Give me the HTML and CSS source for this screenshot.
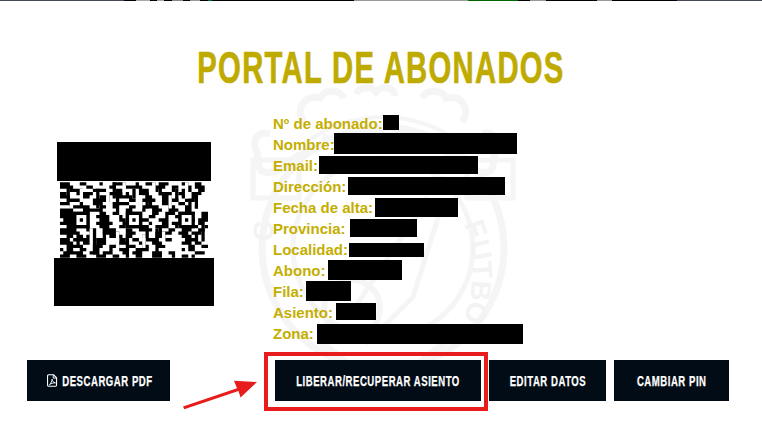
FILE: index.html
```html
<!DOCTYPE html>
<html lang="es">
<head>
<meta charset="utf-8">
<title>Portal de abonados</title>
<link rel="stylesheet" href="styles.css">
</head>
<body>
<div class="strip"></div>
<svg class="crest" viewBox="0 0 270 360" aria-hidden="true">
  <g fill="none" stroke="#f5f5f5">
    <path stroke-width="7" d="M22 52c-12-4-18 6-14 16 4 8 0 20 8 22 10 2 18-2 26-10 6-8 14-6 20-14 8 4 14-2 16-10 10 6 20 2 24-8 8 8 20 8 26 0 6 8 18 8 26 0 4 10 14 14 24 8 2 8 8 14 16 10 6 8 14 6 20 14 8 8 16 12 26 10 8-2 4-14 8-22 4-10-2-20-14-16"/>
    <path stroke-width="7" d="M56 40c-10-14 2-28 16-24 4-8 18-10 24 0M214 40c10-14-2-28-16-24-4-8-18-10-24 0M108 12c4-8 16-8 20-2 6-8 20-4 18 4"/>
    <circle cx="135" cy="166" r="121" stroke-width="7"/>
    <circle cx="135" cy="166" r="90" stroke-width="5"/>
    <path stroke-width="4" d="M55 62c50-36 110-36 160 0"/>
    <rect x="5" y="78" width="46" height="38" stroke-width="5"/>
    <rect x="219" y="78" width="46" height="38" stroke-width="5"/>
    <path stroke-width="5" d="M195 120 165 215 118 262M180 115 104 230"/>
    <circle cx="104" cy="226" r="28" stroke-width="6"/>
    <path stroke-width="7" d="M70 258 135 310 200 258"/>
  </g>
  <text class="crest-letter" transform="translate(216 142) rotate(71)">F</text>
  <text class="crest-letter" transform="translate(221 160) rotate(78)">U</text>
  <text class="crest-letter" transform="translate(224 180) rotate(86)">T</text>
  <text class="crest-letter" transform="translate(224 198) rotate(94)">B</text>
  <text class="crest-letter" transform="translate(221 218) rotate(103)">O</text>
  <text class="crest-letter" transform="translate(24 160) rotate(-85)">C</text>
</svg>

<main class="page">
  <h1 class="title">PORTAL DE ABONADOS</h1>
  <section class="details">
    <div class="qr-box">
      <svg class="qr" viewBox="0 0 45 45" aria-hidden="true">
        <path stroke="#000" stroke-width="1" fill="none" d="
        M0 11.500h3m3 0h2m4 0h1m3 0h4m3 0h1m2 0h3m2 0h2m4 0h2m2 0h2
        M0 12.500h4m4 0h2m5 0h2m3 0h5m4 0h3m2 0h2m2 0h2m1 0h3
        M3 13.500h4m3 0h4m3 0h2m5 0h3m2 0h1m4 0h1m2 0h3m2 0h2
        M0 14.500h2m3 0h5m5 0h6m3 0h3m3 0h4m2 0h2m2 0h3
        M0 15.500h3m4 0h2m3 0h3m2 0h5m4 0h2m3 0h3m3 0h1m2 0h2
        M2 16.500h5m3 0h5m2 0h1m3 0h2m2 0h4m2 0h5m2 0h3
        M0 17.500h3m3 0h1m3 0h3m3 0h5m3 0h1m2 0h1m3 0h3m2 0h2m1 0h1
        M3 18.500h6m3 0h2m2 0h2m3 0h2m2 0h5m3 0h2m3 0h2m1 0h1
        M0 19.500h4m3 0h6m4 0h1m2 0h2m3 0h1m2 0h3m2 0h3m2 0h2
        M0 20.500h9m3 0h2m2 0h2m2 0h5m3 0h2m2 0h3m1 0h5m2 0h2
        M0 21.500h9m2 0h4m3 0h1m1 0h5m2 0h2m3 0h1m2 0h5m3 0h2
        M1 22.500h8m3 0h3m3 0h2m2 0h5m3 0h3m3 0h5m1 0h3
        M0 23.500h9m2 0h5m3 0h6m2 0h1m3 0h2m1 0h5m3 0h2
        M2 24.500h7m3 0h3m3 0h2m2 0h5m2 0h4m2 0h1m1 0h5m2 0h2
        M0 25.500h5m3 0h3m2 0h4m3 0h2m2 0h4m2 0h1m2 0h2m2 0h3m2 0h2
        M0 26.500h6m3 0h2m2 0h5m2 0h3m3 0h1m2 0h5m2 0h3m1 0h3
        M2 27.500h2m1 0h2m1 0h3m4 0h4m1 0h2m3 0h2m2 0h3m5 0h3m1 0h1
        M0 28.500h3m1 0h5m2 0h3m4 0h2m2 0h2m2 0h4m2 0h2m4 0h4m1 0h1
        M0 29.500h4m1 0h1m1 0h2m2 0h3m3 0h4m3 0h2m2 0h3m6 0h3m1 0h2
        M2 30.500h5m3 0h3m2 0h3m3 0h2m2 0h2m2 0h3m7 0h2m2 0h2
        M0 31.500h1m1 0h2m2 0h2m2 0h2m3 0h1m2 0h3m2 0h4m2 0h1m7 0h1m1 0h2
        M1 32.500h6m2 0h3m1 0h3m3 0h2m1 0h3m3 0h3m2 0h2m6 0h3m1 0h1
        M0 33.500h3m2 0h3m3 0h3m2 0h2m2 0h1m2 0h2m3 0h3m3 0h1m2 0h2m1 0h1"/>
        <path stroke="#000" stroke-width="1" fill="none" d="M2.500 12v4M11.500 13v6M16.500 11v5M26.500 14v5M30.500 11v4M41.500 14v5M13.500 25v5M10.500 28v5M20.500 27v5M29.500 25v5M35.500 13v4M22.500 13v3M43.500 24v4"/>
        <path stroke="#fff" stroke-width="1" fill="none" d="M6.500 13v4M9.500 25v3M14.500 14v4M19.500 11v4M24.500 15v4M28.500 11v3M33.500 15v4M38.500 11v5M17.500 26v5M25.500 27v4M31.500 26v4M42.500 15v4M3.500 17v2"/>
        <path fill="#000" d="M4 20h5v5H4zM20 20h5v5h-5zM36 20h5v5h-5z"/>
        <path fill="#fff" fill-rule="evenodd" d="M5 21h3v3H5zm1 1v1h1v-1zM21 21h3v3h-3zm1 1v1h1v-1zM37 21h3v3h-3zm1 1v1h1v-1z"/>
      </svg>
      <div class="qr-mask qr-mask-top"></div>
      <div class="qr-mask qr-mask-bottom"></div>
    </div>
    <div class="info">
      <div class="row"><span>Nº de abonado:</span><i class="mask m1"></i></div>
      <div class="row"><span>Nombre:</span><i class="mask m2"></i></div>
      <div class="row"><span>Email:</span><i class="mask m3"></i></div>
      <div class="row"><span>Dirección:</span><i class="mask m4"></i></div>
      <div class="row"><span>Fecha de alta:</span><i class="mask m5"></i></div>
      <div class="row"><span>Provincia:</span><i class="mask m6"></i></div>
      <div class="row"><span>Localidad:</span><i class="mask m7"></i></div>
      <div class="row"><span>Abono:</span><i class="mask m8"></i></div>
      <div class="row"><span>Fila:</span><i class="mask m9"></i></div>
      <div class="row"><span>Asiento:</span><i class="mask m10"></i></div>
      <div class="row"><span>Zona:</span><i class="mask m11"></i></div>
    </div>
  </section>
  <nav class="actions">
    <a class="btn btn-pdf">
      <svg class="pdf-icon" viewBox="0 0 12 14" aria-hidden="true">
        <path fill="none" stroke="#fff" stroke-width="1.2" d="M1.600 .8h5.600l3.200 3.200v8.200a1 1 0 0 1-1 1H1.600a1 1 0 0 1-1-1V1.800a1 1 0 0 1 1-1z"/>
        <path fill="none" stroke="#fff" stroke-width="1" d="M6.800 1v3.400h3.400M2.600 11.600c1.400-1 2.600-3.200 3-6 .4 2.400 1.400 3.600 3.600 4-1.800-.2-4.600.4-6.600 2z"/>
      </svg><span class="label">DESCARGAR PDF</span></a>
    <a class="btn btn-free"><span class="label">LIBERAR/RECUPERAR ASIENTO</span></a>
    <a class="btn btn-edit"><span class="label">EDITAR DATOS</span></a>
    <a class="btn btn-pin"><span class="label">CAMBIAR PIN</span></a>
  </nav>
</main>
<div class="callout"></div>
<svg class="arrow" viewBox="0 0 80 32" aria-hidden="true">
  <path fill="#e81c1c" d="M1 27.400 55 9.200 52 1.800 75 3 58.500 18.500 56.500 12 2.300 30.200z"/>
</svg>
</body>
</html>
```

FILE: styles.css
```css
* { box-sizing: border-box; }
html, body { margin: 0; padding: 0; }
body {
  position: relative;
  width: 762px;
  height: 438px;
  overflow: hidden;
  background: #fff;
  font-family: "Liberation Sans", Arial, sans-serif;
}
.strip {
  height: 1px;
  background: linear-gradient(90deg,
    #454a58 0 124px, #000 124px 136px, #aaa 136px 150px, #000 150px 157px,
    #aaa 157px 164px, #000 164px 172px, #888 172px 183px, #000 183px 190px,
    #999 190px 200px, #000 200px 208px, #063 208px 212px, #000 212px 354px,
    #999 354px 468px, #060 468px 518px, #000 518px 530px, #999 530px 546px,
    #000 546px 597px, #999 597px 612px, #000 612px 677px, #454a58 677px);
}
.crest {
  position: absolute;
  left: 248px;
  top: 82px;
  width: 270px;
  height: 360px;
}
.crest-letter {
  font: 700 28px "Liberation Sans", sans-serif;
  fill: #f3f3f3;
}
.page { position: relative; }
.title {
  margin: 38px 0 0;
  height: 58px;
  font: 700 45px/58px "Liberation Sans", sans-serif;
  letter-spacing: 2px;
  color: #bfab00;
  -webkit-text-stroke: .7px #bfab00;
  text-align: center;
  transform: scaleX(.65);
  white-space: nowrap;
}
.details {
  display: flex;
  margin-top: 16px;
  padding-left: 60px;
}
.qr-box {
  position: relative;
  width: 148px;
  height: 148px;
  margin-top: 33px;
  flex: none;
}
.qr { display: block; width: 148px; height: 148px; }
.qr-mask { position: absolute; background: #000; }
.qr-mask-top { left: -3px; top: -4px; width: 154px; height: 39px; }
.qr-mask-bottom { left: -6px; top: 112px; width: 160px; height: 48px; }
.info {
  margin-left: 65px;
  font-size: 15px;
  font-weight: 700;
  color: #c4ae00;
}
.row {
  display: flex;
  height: 21px;
  line-height: 21px;
  white-space: nowrap;
}
.mask { display: block; flex: none; background: #000; }
.m1 { width: 16px; height: 15px; margin: 2px 0 0; }
.m2 { width: 183px; height: 21px; margin: -1px 0 0 -1px; }
.m3 { width: 159px; height: 18px; margin: 1px 0 0 1px; }
.m4 { width: 157px; height: 18px; margin: 1px 0 0 2px; }
.m5 { width: 83px; height: 19px; margin: 1px 0 0 2px; }
.m6 { width: 67px; height: 18px; margin: 1px 0 0 4px; }
.m7 { width: 75px; height: 14px; margin: 4px 0 0 1px; }
.m8 { width: 74px; height: 20px; margin: 0 0 0 3px; }
.m9 { width: 45px; height: 20px; margin: 0 0 0 2px; }
.m10 { width: 40px; height: 17px; margin: 1px 0 0 3px; }
.m11 { width: 206px; height: 20px; margin: 1px 0 0 3px; }
.actions {
  display: flex;
  gap: 8px;
  margin-top: 16px;
  padding-left: 27px;
}
.btn {
  display: flex;
  align-items: center;
  justify-content: center;
  height: 41px;
  background: #020c16;
  color: #fff;
  font: 700 14.500px "Liberation Sans", sans-serif;
  letter-spacing: .8px;
  white-space: nowrap;
}
.label {
  flex: none;
  transform: scaleX(.66);
  -webkit-text-stroke: .25px #fff;
}
.btn-pdf { width: 143px; margin-right: 97px; justify-content: flex-start; padding-left: 20px; }
.btn-free { width: 206px; }
.btn-edit { width: 117px; }
.btn-pin { width: 115px; }
.pdf-icon { width: 11px; height: 13px; margin-right: -19px; flex: none; }
.callout {
  position: absolute;
  left: 264px;
  top: 352px;
  width: 224px;
  height: 59px;
  border: 4px solid #e81c1c;
}
.arrow {
  position: absolute;
  left: 182px;
  top: 379px;
  width: 80px;
  height: 32px;
}
```
